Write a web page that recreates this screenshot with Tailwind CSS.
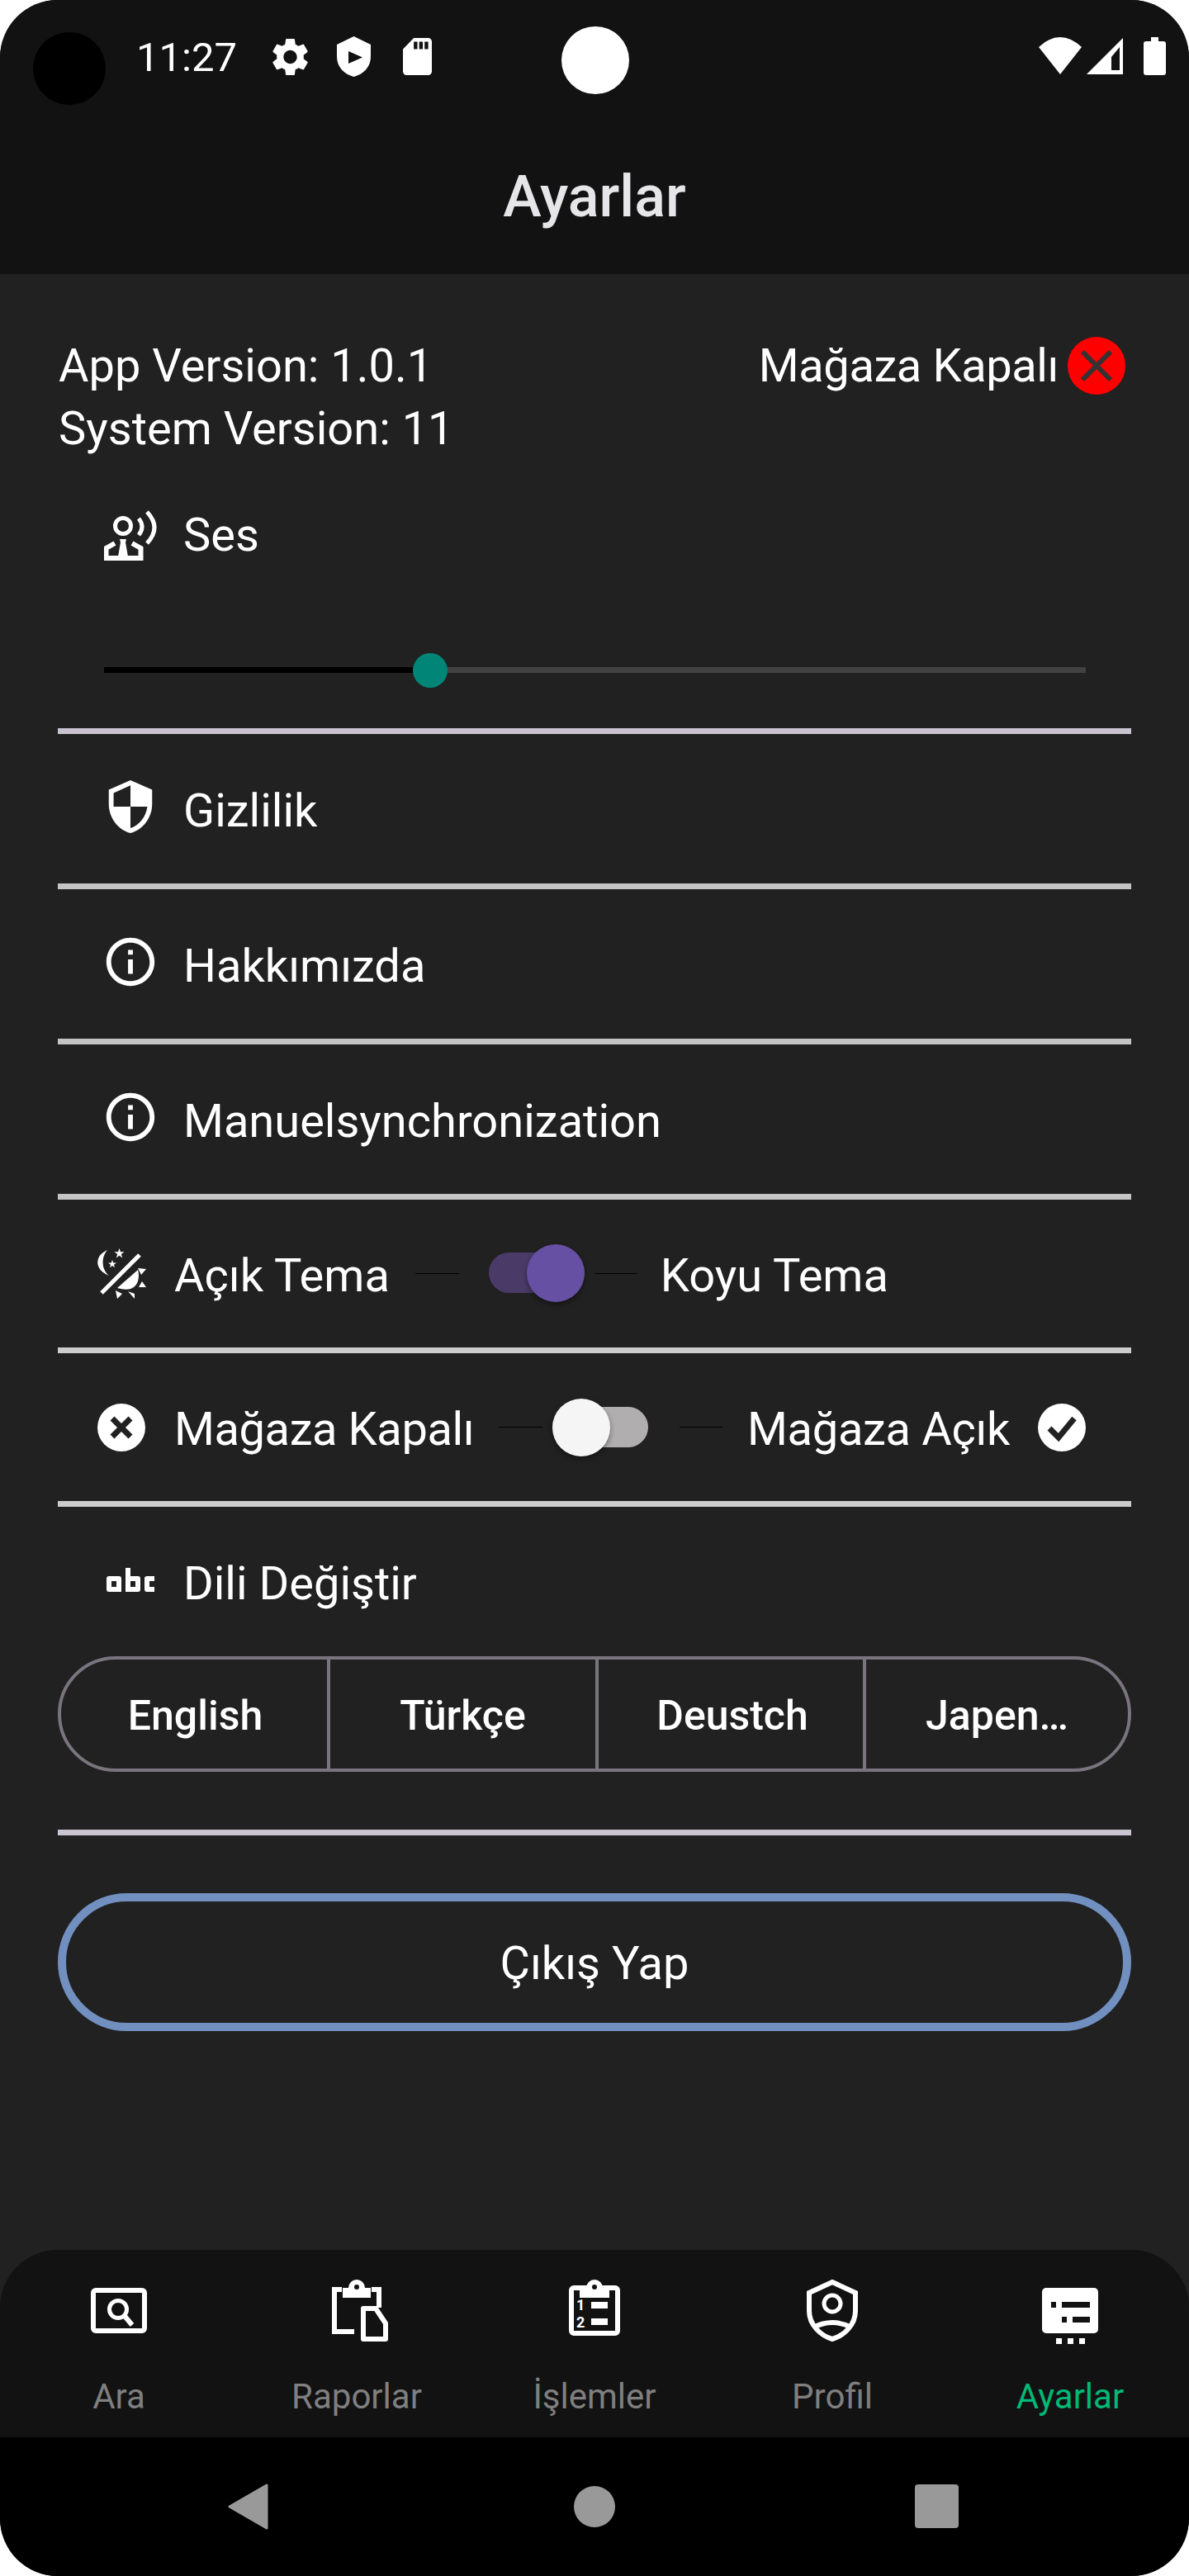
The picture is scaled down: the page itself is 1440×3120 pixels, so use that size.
<!DOCTYPE html>
<html lang="en">
<head>
    <meta charset="UTF-8">
    <meta name="viewport" content="width=device-width, initial-scale=1.0">
    <title>Ayarlar</title>
    <script src="https://cdn.jsdelivr.net/npm/@tailwindcss/browser@4"></script>
</head>
<body class="bg-white font-['Roboto',sans-serif]">
<div class="relative w-[1440px] h-[3120px] rounded-[70px] overflow-hidden flex flex-col bg-[#212121] text-white">

    <!-- Camera and status dot -->
    <div class="absolute left-[40px] top-[39px] w-[88px] h-[88px] rounded-full bg-black"></div>
    <div class="absolute left-[680px] top-[32px] w-[82px] h-[82px] rounded-full bg-white"></div>

    <!-- Header -->
    <header class="h-[332px] shrink-0 bg-[#121212]">
        <div class="h-[136px] flex items-start pt-[44px] pl-[165px] pr-[28px]">
            <span class="text-[49px] leading-[52px] w-[165px]">11:27</span>
            <svg class="w-[43px] h-[46px] mt-[2px]" viewBox="2.5 2 19 20" fill="white" preserveAspectRatio="none"><path d="M19.14 12.94c.04-.3.06-.61.06-.94 0-.32-.02-.64-.07-.94l2.03-1.58c.18-.14.23-.41.12-.61l-1.92-3.32c-.12-.22-.37-.29-.59-.22l-2.39.96c-.5-.38-1.03-.7-1.62-.94l-.36-2.54c-.04-.24-.24-.41-.48-.41h-3.84c-.24 0-.43.17-.47.41l-.36 2.54c-.59.24-1.13.57-1.62.94l-2.39-.96c-.22-.08-.47 0-.59.22L2.74 8.87c-.12.21-.08.47.12.61l2.03 1.58c-.05.3-.09.63-.09.94s.02.64.07.94l-2.03 1.58c-.18.14-.23.41-.12.61l1.92 3.32c.12.22.37.29.59.22l2.39-.96c.5.38 1.03.7 1.62.94l.36 2.54c.05.24.24.41.48.41h3.84c.24 0 .44-.17.47-.41l.36-2.54c.59-.24 1.13-.56 1.62-.94l2.39.96c.22.08.47 0 .59-.22l1.92-3.32c.12-.22.07-.47-.12-.61l-2.01-1.58zM12 15.6c-1.98 0-3.6-1.62-3.6-3.6s1.62-3.6 3.6-3.6 3.6 1.62 3.6 3.6-1.62 3.6-3.6 3.6z"/></svg>
            <svg class="w-[41px] h-[49px] ml-[35px]" viewBox="0 0 41 49" fill="white"><path fill-rule="evenodd" d="M20.5 0L41 10V25C41 37 32 46 20.5 49C9 46 0 37 0 25V10ZM14 18V33L31 25.500Z"/></svg>
            <svg class="w-[35px] h-[45px] ml-[39px] mt-[2px]" viewBox="4 2 16 20" fill="white" preserveAspectRatio="none"><path d="M18 2h-8L4.020 8 4 20c0 1.100.9 2 2 2h12c1.100 0 2-.9 2-2V4c0-1.100-.9-2-2-2zm-6 6h-2V4h2v4zm3 0h-2V4h2v4zm3 0h-2V4h2v4z"/></svg>
            <div class="flex-1"></div>
            <svg class="w-[52px] h-[45px] mt-[1px]" viewBox="0 0 52 45" fill="white"><path d="M0 12Q26 -12 52 12L26 45Z"/></svg>
            <svg class="w-[44px] h-[44px] ml-[6px] mt-[2px]" viewBox="0 0 44 44" fill="white"><path fill-rule="evenodd" d="M0 44L44 0V44ZM30 39H40V11L30 23Z"/></svg>
            <svg class="w-[27px] h-[46px] ml-[25px] mt-[1px]" viewBox="0 0 27 46" fill="white"><path d="M9 0h9v5h6a3 3 0 0 1 3 3v35a3 3 0 0 1-3 3H3a3 3 0 0 1-3-3V8a3 3 0 0 1 3-3h6z"/></svg>
        </div>
        <h1 class="text-center text-[70px] leading-[72px] font-medium text-[#e6e6e8] mt-[66px]">Ayarlar</h1>
    </header>

    <!-- Settings -->
    <main class="flex-1 px-[70px]">
        <div class="flex justify-between pt-[73px]">
            <div class="text-[56px] leading-[76px] pl-[1px]">
                <p>App Version: 1.0.1</p>
                <p>System Version: 11</p>
            </div>
            <div class="flex items-start">
                <span class="text-[56px] leading-[76px] tracking-[-0.4px] mr-[11px]">Mağaza Kapalı</span>
                <svg class="w-[70px] h-[70px] mt-[3px] mr-[7px]" viewBox="0 0 70 70"><circle cx="35" cy="35" r="35" fill="#ff0000"/><path d="M18 18L52 52M52 18L18 52" stroke="#333333" stroke-width="6"/></svg>
            </div>
        </div>

        <!-- Ses -->
        <section class="h-[332px] border-b-[7px] border-[#cac4d0]">
            <div class="flex items-center pl-[56px] pt-[53px]">
                <svg class="w-[64px] h-[61px]" viewBox="0 0 64 61" fill="none" stroke="white"><circle cx="23" cy="19" r="9.500" stroke-width="5"/><path d="M2.500 61V46L13 40M44.500 61V46L34 40M0 58H47" stroke-width="6"/><path d="M19 35h8l-1 4 3 17H17l3-17z" fill="white" stroke="none"/><path d="M42 10Q50 20 42 30" stroke-width="5"/><path d="M52 2Q70 21 52 40" stroke-width="5"/></svg>
                <span class="text-[56px] leading-[76px] ml-[32px]">Ses</span>
            </div>
            <div class="relative ml-[56px] mr-[55px] mt-[122px] h-[7px] bg-[#424242]">
                <div class="h-full w-[396px] bg-black"></div>
                <div class="absolute left-[374px] top-[-17px] w-[42px] h-[42px] rounded-full bg-[#008577]"></div>
            </div>
        </section>

        <!-- Links -->
        <section class="h-[188px] border-b-[7px] border-[#c4c4c4] flex items-center pl-[53px]">
            <svg class="w-[70px] h-[70px] mb-[5px]" viewBox="0 0 24 24" fill="white"><path d="M12 1L3 5v6c0 5.550 3.840 10.740 9 12 5.160-1.260 9-6.450 9-12V5l-9-4zm0 10.990h7c-.53 4.120-3.280 7.790-7 8.940V12H5V6.300l7-3.110v8.800z"/></svg>
            <span class="text-[56px] leading-[76px] ml-[29px] mt-[4px]">Gizlilik</span>
        </section>
        <section class="h-[188px] border-b-[7px] border-[#c4c4c4] flex items-center pl-[53px]">
            <svg class="w-[70px] h-[70px] mb-[5px]" viewBox="0 0 24 24" fill="white"><path d="M11 7h2v2h-2zm0 4h2v6h-2zm1-9C6.480 2 2 6.480 2 12s4.480 10 10 10 10-4.480 10-10S17.520 2 12 2zm0 18c-4.410 0-8-3.590-8-8s3.590-8 8-8 8 3.590 8 8-3.590 8-8 8z"/></svg>
            <span class="text-[56px] leading-[76px] ml-[29px] mt-[4px]">Hakkımızda</span>
        </section>
        <section class="h-[188px] border-b-[7px] border-[#c4c4c4] flex items-center pl-[53px]">
            <svg class="w-[70px] h-[70px] mb-[6px]" viewBox="0 0 24 24" fill="white"><path d="M11 7h2v2h-2zm0 4h2v6h-2zm1-9C6.480 2 2 6.480 2 12s4.480 10 10 10 10-4.480 10-10S17.520 2 12 2zm0 18c-4.410 0-8-3.590-8-8s3.590-8 8-8 8 3.590 8 8-3.590 8-8 8z"/></svg>
            <span class="text-[56px] leading-[76px] ml-[29px] mt-[4px]">Manuelsynchronization</span>
        </section>

        <!-- Theme -->
        <section class="h-[186px] border-b-[7px] border-[#cccccc] flex items-center pl-[47px]">
            <svg class="w-[60px] h-[61px]" viewBox="0 0 60 61" fill="white"><path d="M13 2C-3 9 -3 26 15 33C6 26 5 11 13 2Z"/><polygon points="27.500,0 29,4.200 33.500,4.200 29.800,7 31.200,11.500 27.500,8.800 23.800,11.500 25.200,7 21.500,4.200 26,4.200"/><polygon points="19,14 20.200,17.500 24,17.500 21,19.700 22,23.200 19,21 16,23.200 17,19.700 14,17.500 17.800,17.500"/><path d="M52 8L6 54" stroke="white" stroke-width="5"/><path d="M50 26L25 48Q45 54 50 40Q52 32 50 26Z"/><path d="M50 24L60 25 54 32ZM55 40L60 47 51 47ZM38 52L46 55 46 61ZM23 51L31 55 25 61Z"/></svg>
            <span class="text-[56px] leading-[76px] ml-[34px] mt-[4px]">Açık Tema</span>
            <div class="w-[53px] h-[1px] bg-black ml-[31px]"></div>
            <div class="relative w-[116px] h-[49px] ml-[36px] mb-[2px] rounded-full bg-[#4a3a68]">
                <div class="absolute right-0 top-[-10px] w-[70px] h-[70px] rounded-full bg-[#6650a4] shadow-[0_3px_6px_rgba(0,0,0,0.4)]"></div>
            </div>
            <div class="w-[52px] h-[1px] bg-black ml-[12px]"></div>
            <span class="text-[56px] leading-[76px] ml-[28px] mt-[4px]">Koyu Tema</span>
        </section>

        <!-- Store -->
        <section class="h-[186px] border-b-[7px] border-[#cccccc] flex items-center pl-[48px]">
            <svg class="w-[58px] h-[58px]" viewBox="0 0 58 58"><circle cx="29" cy="29" r="29" fill="white"/><path d="M18 18L40 40M40 18L18 40" stroke="#212121" stroke-width="7"/></svg>
            <span class="w-[360px] whitespace-nowrap text-[56px] leading-[76px] tracking-[-0.4px] ml-[35px] mt-[4px]">Mağaza Kapalı</span>
            <div class="w-[53px] h-[1px] bg-black ml-[33px]"></div>
            <div class="relative w-[116px] h-[49px] ml-[12px] rounded-full bg-[#b0aeae]">
                <div class="absolute left-0 top-[-10px] w-[70px] h-[70px] rounded-full bg-[#f5f5f5] shadow-[0_3px_6px_rgba(0,0,0,0.4)]"></div>
            </div>
            <div class="w-[52px] h-[1px] bg-black ml-[38px]"></div>
            <span class="text-[56px] leading-[76px] tracking-[-0.3px] ml-[30px] mt-[4px]">Mağaza Açık</span>
            <svg class="w-[58px] h-[58px] ml-[34px]" viewBox="0 0 58 58"><circle cx="29" cy="29" r="29" fill="white"/><path d="M14 30L25 41L44 18" fill="none" stroke="#212121" stroke-width="7"/></svg>
        </section>

        <!-- Language -->
        <section class="h-[398px] border-b-[7px] border-[#cac4d0]">
            <div class="flex items-center pl-[59px] pt-[55px]">
                <svg class="w-[58px] h-[30px] mb-[8px]" viewBox="0 0 58 30" fill="white"><path fill-rule="evenodd" d="M3 10H15Q18 10 18 13V29H3Q0 29 0 26V13Q0 10 3 10ZM6 16V23H12V16ZM23 0H29V10H38Q41 10 41 13V26Q41 29 38 29H23ZM29 16V23H35V16ZM49 10H58V16H52V23H58V29H49Q46 29 46 26V13Q46 10 49 10Z"/></svg>
                <span class="text-[56px] leading-[76px] ml-[35px]">Dili Değiştir</span>
            </div>
            <div class="mt-[50px] h-[140px] flex rounded-full border-[4px] border-[#79747e] text-[50px] font-medium overflow-hidden">
                <div class="w-[326px] flex items-center justify-center pl-[3px] pt-[4px] border-r-[4px] border-[#79747e]">English</div>
                <div class="w-[325px] flex items-center justify-center pt-[4px] border-r-[4px] border-[#79747e]">Türkçe</div>
                <div class="w-[324px] flex items-center justify-center pl-[4px] pt-[4px] border-r-[4px] border-[#79747e]">Deustch</div>
                <div class="flex-1 flex items-center justify-center pt-[4px]">Japen…</div>
            </div>
        </section>

        <button class="mt-[70px] pt-[3px] w-full h-[167px] rounded-full border-[10px] border-[#7190c0] text-[56px]">Çıkış Yap</button>
    </main>

    <!-- Tab bar -->
    <nav class="h-[227px] shrink-0 bg-[#121212] rounded-t-[70px] grid grid-cols-5 text-[42px] text-[#7f7f7f]">
        <div class="flex flex-col items-center">
            <svg class="w-[68px] h-[55px] mt-[46px] mb-[52px]" viewBox="0 0 68 55" fill="none" stroke="white"><rect x="3" y="3" width="62" height="49" rx="3" stroke-width="6"/><circle cx="33" cy="26" r="10.500" stroke-width="5"/><path d="M40 33L50 45" stroke-width="6"/></svg>
            <span class="leading-[50px]">Ara</span>
        </div>
        <div class="flex flex-col items-center">
            <svg class="w-[68px] h-[75px] mt-[36px] mb-[42px] ml-[8px]" viewBox="0 0 68 75" fill="none" stroke="white"><path d="M12 12H3V63H27M48 12H57V34" stroke-width="6"/><path d="M13 10h7a10 10 0 0 1 20 0h7v12H13z" fill="white" stroke="none"/><circle cx="30" cy="9" r="3" fill="#121212" stroke="none"/><path d="M38 35H53L65 53V72H38Z" stroke-width="6" stroke-linejoin="round"/></svg>
            <span class="leading-[50px]">Raporlar</span>
        </div>
        <div class="flex flex-col items-center">
            <svg class="w-[62px] h-[68px] mt-[36px] mb-[49px]" viewBox="0 0 62 68" fill="none" stroke="white"><rect x="3" y="10" width="56" height="55" rx="3" stroke-width="6"/><path d="M13 10h8a10 10 0 0 1 20 0h8v12H13z" fill="white" stroke="none"/><circle cx="31" cy="9" r="3" fill="#121212" stroke="none"/><text x="9" y="37" font-size="18" font-weight="700" fill="white" stroke="none">1</text><text x="9" y="58" font-size="18" font-weight="700" fill="white" stroke="none">2</text><path d="M27 31H47M27 51H47" stroke-width="8"/></svg>
            <span class="leading-[50px]">İşlemler</span>
        </div>
        <div class="flex flex-col items-center">
            <svg class="w-[62px] h-[75px] mt-[36px] mb-[42px]" viewBox="0 0 62 75" fill="none" stroke="white"><path d="M31 3L59 16V38C59 55 45 68 31 72C17 68 3 55 3 38V16Z" stroke-width="6"/><circle cx="31" cy="29" r="10" stroke-width="5"/><path d="M8 58Q31 46 54 58" stroke-width="6"/></svg>
            <span class="leading-[50px]">Profil</span>
        </div>
        <div class="flex flex-col items-center text-[#00b976]">
            <svg class="w-[68px] h-[68px] mt-[46px] mb-[39px]" viewBox="0 0 68 68" fill="white"><rect width="68" height="55" rx="5"/><path d="M11 17h6v7h-6zM24 17h34v7H24zM24 35h6v7h-6zM37 35h21v7H37z" fill="#121212"/><path d="M17 61h7v7h-7zM31 61h7v7h-7zM45 61h7v7h-7z"/></svg>
            <span class="leading-[50px]">Ayarlar</span>
        </div>
    </nav>

    <!-- Android nav -->
    <footer class="h-[168px] shrink-0 bg-black flex items-start pt-[56px] relative">
        <svg class="w-[49px] h-[56px] ml-[276px]" viewBox="0 0 49 56" fill="#999999"><path d="M47 2V54L2 28Z" stroke="#999999" stroke-width="3" stroke-linejoin="round"/></svg>
        <div class="w-[50px] h-[50px] rounded-full bg-[#999999] ml-[370px] mt-[3px]"></div>
        <div class="w-[53px] h-[53px] rounded-[4px] bg-[#999999] ml-[363px] mt-[1px]"></div>
    </footer>
</div>
</body>
</html>
